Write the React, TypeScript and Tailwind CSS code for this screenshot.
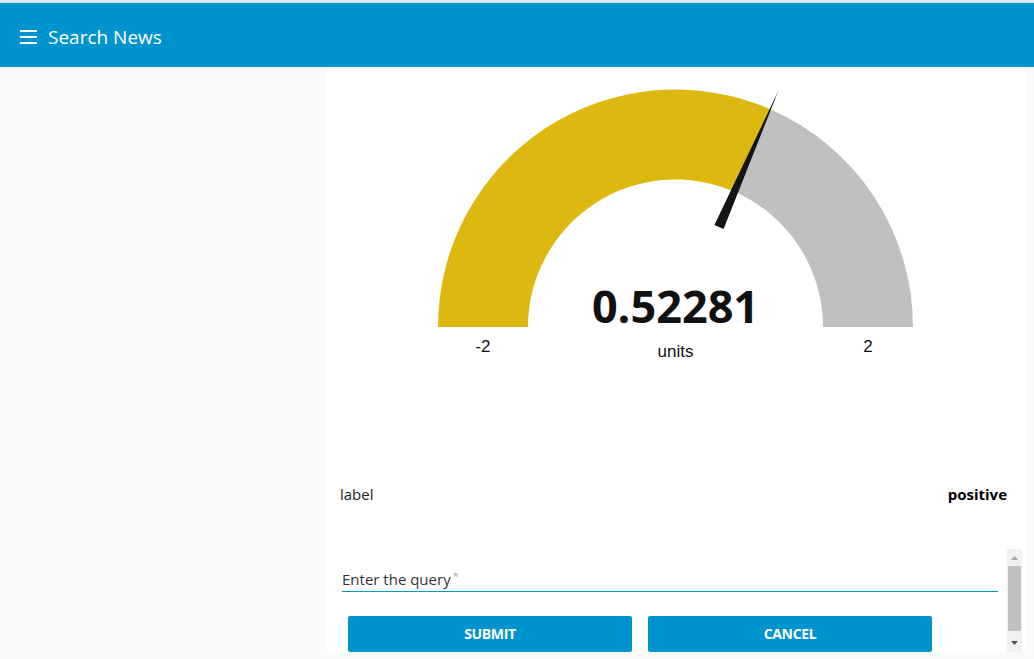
import React from "react";

const CX = 348.5;
const CY = 260;
const R_OUT = 237.5;
const R_IN = 147.5;
const MIN = -2;
const MAX = 2;
const VALUE = 0.52281;

function polar(r: number, deg: number) {
  const a = (deg * Math.PI) / 180;
  return [CX + r * Math.cos(a), CY - r * Math.sin(a)];
}

function Gauge() {
  // angle measured from the positive x axis, 180 = min, 0 = max
  const deg = 180 - ((VALUE - MIN) / (MAX - MIN)) * 180;
  const [ox, oy] = polar(R_OUT, deg);
  const [ix, iy] = polar(R_IN, deg);

  const yellow = `M ${CX - R_OUT} ${CY} A ${R_OUT} ${R_OUT} 0 0 1 ${ox} ${oy} L ${ix} ${iy} A ${R_IN} ${R_IN} 0 0 0 ${CX - R_IN} ${CY} Z`;
  const grey = `M ${ox} ${oy} A ${R_OUT} ${R_OUT} 0 0 1 ${CX + R_OUT} ${CY} L ${CX + R_IN} ${CY} A ${R_IN} ${R_IN} 0 0 0 ${ix} ${iy} Z`;

  /* needle: thin triangle from r=109 to r=258 */
  const [bx, by] = polar(109, deg);
  const [tx, ty] = polar(258, deg);
  const a = (deg * Math.PI) / 180;
  const nx = Math.sin(a) * 5;
  const ny = Math.cos(a) * 5;
  const needle = `M ${bx - nx} ${by - ny} L ${tx} ${ty} L ${bx + nx} ${by + ny} Z`;

  return (
    <svg width="698" height="410" viewBox="0 0 698 410" className="block shrink-0">
      <path d={yellow} fill="#ddb810" />
      <path d={grey} fill="#c0c0c0" />
      <path d={needle} fill="#141414" />
      <text
        x={CX}
        y={256}
        textAnchor="middle"
        fontFamily="'Open Sans', sans-serif"
        fontWeight="700"
        fontSize="45"
        fill="#111"
      >
        {VALUE}
      </text>
      <text x={CX} y={290} textAnchor="middle" fontFamily="'Liberation Sans', Arial, sans-serif" fontSize="17" fill="#111">
        units
      </text>
      <text x={CX - R_OUT + 45} y={285} textAnchor="middle" fontFamily="'Liberation Sans', Arial, sans-serif" fontSize="17" fill="#111">
        {MIN}
      </text>
      <text x={CX + R_IN + 45} y={285} textAnchor="middle" fontFamily="'Liberation Sans', Arial, sans-serif" fontSize="17" fill="#111">
        {MAX}
      </text>
    </svg>
  );
}

export default function App() {
  return (
    <div className="w-[1034px] h-[659px] bg-[#fafafa] flex flex-col overflow-hidden font-['Open_Sans',sans-serif]">
      <div className="h-[3px] bg-[#dfe8ee] shrink-0" />
      <header className="h-[64px] bg-[#0094ce] flex items-center pl-5 pt-[4px] shrink-0">
        <svg width="17" height="14" viewBox="0 0 17 14">
          <rect x="0" y="0" width="17" height="2" fill="#fff" />
          <rect x="0" y="6" width="17" height="2" fill="#fff" />
          <rect x="0" y="12" width="17" height="2" fill="#fff" />
        </svg>
        <h1 className="ml-[11px] text-[19px] text-white leading-none">Search News</h1>
      </header>

      <main className="flex flex-1">
        <div className="w-[327px] shrink-0" />
        <div className="w-[698px] h-[585px] bg-white flex flex-col shrink-0">
          <Gauge />

          <div className="h-[34px] flex items-center justify-between pl-[13px] pr-[18px] text-[15px] text-[#222]">
            <span>label</span>
            <span className="font-bold text-black">positive</span>
          </div>

          <div className="mt-[38px] h-[103px] flex overflow-hidden">
            <div className="flex-1 pl-[15px] pr-[9px] overflow-hidden">
              <div className="mt-[18px] h-[24px] flex items-center text-[15px] text-[#333]">
                Enter the query
                <span className="ml-[2px] text-[11px] text-[#aaa] self-start mt-[1px]">*</span>
              </div>
              <div className="h-[1px] bg-[#0094ce]" />
              <div className="mt-[24px] ml-[6px] flex gap-4">
                <button className="w-[284px] h-[36px] bg-[#0094ce] rounded-[2px] text-white text-[14px] font-bold tracking-tight pb-[2px]">
                  SUBMIT
                </button>
                <button className="w-[284px] h-[36px] bg-[#0094ce] rounded-[2px] text-white text-[14px] font-bold tracking-tight pb-[2px]">
                  CANCEL
                </button>
              </div>
            </div>
            <div className="w-[15px] mr-[3px] bg-[#f1f1f1] flex flex-col items-center">
              <svg width="15" height="17" viewBox="0 0 15 17">
                <path d="M4 11 L7.5 7 L11 11 Z" fill="#a3a3a3" />
              </svg>
              <div className="w-[13px] h-[65px] bg-[#c1c1c1]" />
              <div className="flex-1" />
              <svg width="15" height="17" viewBox="0 0 15 17">
                <path d="M4 6 L11 6 L7.5 10 Z" fill="#505050" />
              </svg>
            </div>
          </div>
        </div>
        <div className="flex-1" />
      </main>
    </div>
  );
}
